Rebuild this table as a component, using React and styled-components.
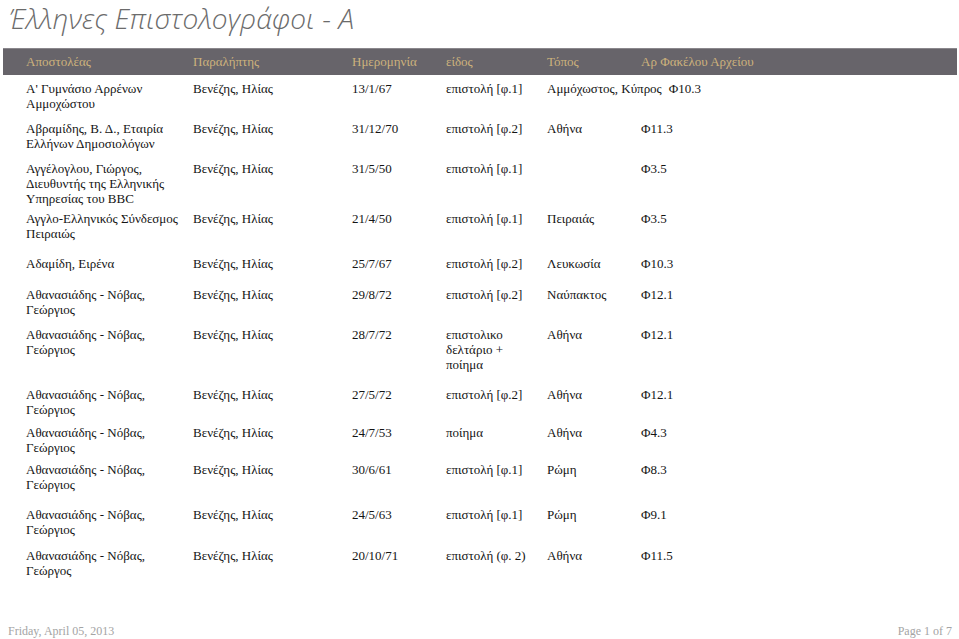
import React from "react";
import styled, { createGlobalStyle } from "styled-components";

const rows = [
  { h: 40, c: [["Α' Γυμνάσιο Αρρένων", "Αμμοχώστου"], ["Βενέζης, Ηλίας"], ["13/1/67"], ["επιστολή [φ.1]"], ["Αμμόχωστος, Κύπρος"], ["Φ10.3"]] },
  { h: 40, c: [["Αβραμίδης, Β. Δ., Εταιρία", "Ελλήνων Δημοσιολόγων"], ["Βενέζης, Ηλίας"], ["31/12/70"], ["επιστολή [φ.2]"], ["Αθήνα"], ["Φ11.3"]] },
  { h: 50, c: [["Αγγέλογλου, Γιώργος,", "Διευθυντής της Ελληνικής", "Υπηρεσίας του BBC"], ["Βενέζης, Ηλίας"], ["31/5/50"], ["επιστολή [φ.1]"], [""], ["Φ3.5"]] },
  { h: 45, c: [["Αγγλο-Ελληνικός Σύνδεσμος", "Πειραιώς"], ["Βενέζης, Ηλίας"], ["21/4/50"], ["επιστολή [φ.1]"], ["Πειραιάς"], ["Φ3.5"]] },
  { h: 31, c: [["Αδαμίδη, Ειρένα"], ["Βενέζης, Ηλίας"], ["25/7/67"], ["επιστολή [φ.2]"], ["Λευκωσία"], ["Φ10.3"]] },
  { h: 40, c: [["Αθανασιάδης - Νόβας,", "Γεώργιος"], ["Βενέζης, Ηλίας"], ["29/8/72"], ["επιστολή [φ.2]"], ["Ναύπακτος"], ["Φ12.1"]] },
  { h: 60, c: [["Αθανασιάδης - Νόβας,", "Γεώργιος"], ["Βενέζης, Ηλίας"], ["28/7/72"], ["επιστολικο", "δελτάριο +", "ποίημα"], ["Αθήνα"], ["Φ12.1"]] },
  { h: 38, c: [["Αθανασιάδης - Νόβας,", "Γεώργιος"], ["Βενέζης, Ηλίας"], ["27/5/72"], ["επιστολή [φ.2]"], ["Αθήνα"], ["Φ12.1"]] },
  { h: 37, c: [["Αθανασιάδης - Νόβας,", "Γεώργιος"], ["Βενέζης, Ηλίας"], ["24/7/53"], ["ποίημα"], ["Αθήνα"], ["Φ4.3"]] },
  { h: 45, c: [["Αθανασιάδης - Νόβας,", "Γεώργιος"], ["Βενέζης, Ηλίας"], ["30/6/61"], ["επιστολή [φ.1]"], ["Ρώμη"], ["Φ8.3"]] },
  { h: 41, c: [["Αθανασιάδης - Νόβας,", "Γεώργιος"], ["Βενέζης, Ηλίας"], ["24/5/63"], ["επιστολή [φ.1]"], ["Ρώμη"], ["Φ9.1"]] },
  { h: 34, c: [["Αθανασιάδης - Νόβας,", "Γεώργος"], ["Βενέζης, Ηλίας"], ["20/10/71"], ["επιστολή (φ. 2)"], ["Αθήνα"], ["Φ11.5"]] },
];

const heads = ["Αποστολέας", "Παραλήπτης", "Ημερομηνία", "είδος", "Τόπος", "Αρ Φακέλου Αρχείου"];

const Global = createGlobalStyle`
  html, body { margin: 0; padding: 0; background: #fff; }
`;

const Page = styled.div`
  width: 959px;
  height: 639px;
  display: flex;
  flex-direction: column;
  overflow: hidden;
`;

const Title = styled.h1`
  margin: 0;
  padding: 0 0 0 9px;
  height: 48px;
  font-family: "Open Sans", sans-serif;
  font-style: italic;
  font-weight: 300;
  font-size: 28px;
  line-height: 36px;
  color: #6b6b6b;
  letter-spacing: 0.2px;
  white-space: nowrap;
`;

const Grid = styled.div`
  display: grid;
  grid-template-columns: 167px 159px 94px 101px minmax(94px, max-content) 1fr;
  padding-left: 23px;
`;

const HeadBar = styled(Grid)`
  margin: 0 2px 0 3px;
  height: 27px;
  align-items: center;
  background: #67646a;
  border-top: 1px solid #8a878c;
  box-sizing: border-box;
  font-family: "Liberation Serif", serif;
  font-size: 13px;
  color: #cdb27c;
`;

const Body = styled.div`
  padding-top: 6px;
  margin-left: 3px;
`;

const Row = styled(Grid)`
  height: ${(p) => p.$h}px;
  font-family: "Liberation Serif", serif;
  font-size: 13px;
  line-height: 15px;
  color: #141414;
`;

const Cell = styled.div`
  white-space: nowrap;
  padding-right: 7px;
`;

const Footer = styled.div`
  margin-top: auto;
  display: flex;
  justify-content: space-between;
  padding: 0 7px 0 8px;
  font-family: "Liberation Serif", serif;
  font-size: 12px;
  line-height: 16px;
  color: #a4a4a4;
`;

export default function App() {
  return (
    <Page>
      <Global />
      <Title>Έλληνες Επιστολογράφοι - Α</Title>
      <HeadBar>
        {heads.map((h) => (
          <Cell key={h}>{h}</Cell>
        ))}
      </HeadBar>
      <Body>
        {rows.map((r, i) => (
          <Row key={i} $h={r.h}>
            {r.c.map((lines, j) => (
              <Cell key={j}>
                {lines.map((l, k) => (
                  <div key={k}>{l}</div>
                ))}
              </Cell>
            ))}
          </Row>
        ))}
      </Body>
      <Footer>
        <span>Friday, April 05, 2013</span>
        <span>Page 1 of 7</span>
      </Footer>
    </Page>
  );
}
